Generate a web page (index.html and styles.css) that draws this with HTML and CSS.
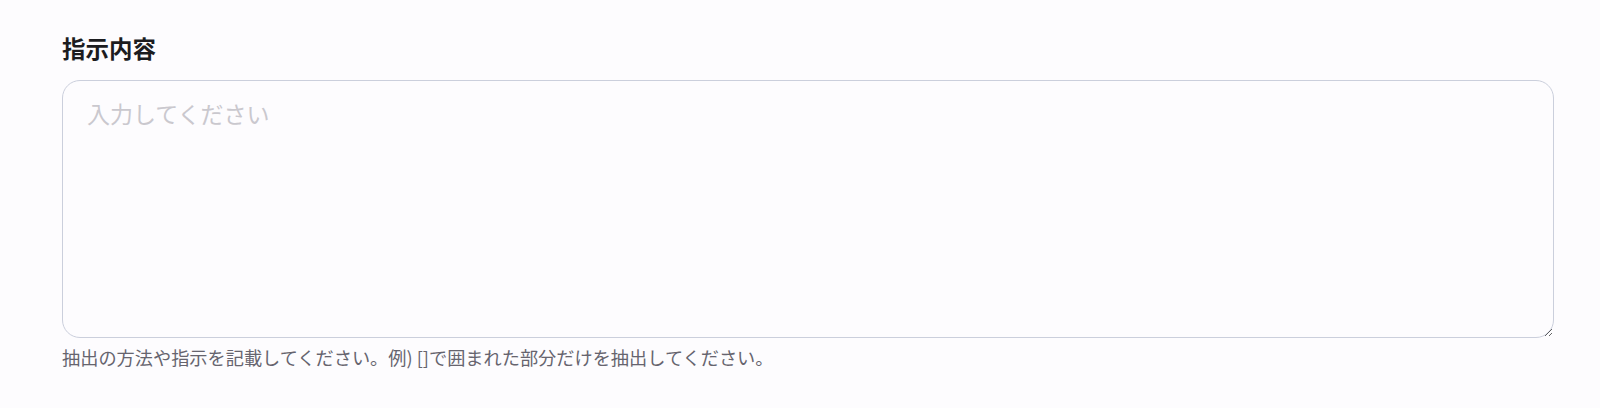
FILE: index.html
```html
<!DOCTYPE html>
<html lang="ja">
<head>
<meta charset="UTF-8" />
<title>指示内容</title>
<link rel="stylesheet" href="styles.css">
</head>
<body>
<div class="field">
	<label class="field-label" for="instruction">指示内容</label>
	<textarea id="instruction" class="field-input" placeholder="入力してください"></textarea>
	<p class="field-help">抽出の方法や指示を記載してください。例) []で囲まれた部分だけを抽出してください。</p>
</div>
</body>
</html>
```

FILE: styles.css
```css
* {
	margin: 0;
	padding: 0;
	box-sizing: border-box;
}

body {
	background-color: #fdfcfe;
	font-family: "Noto Sans CJK JP", "Noto Sans", sans-serif;
	color: #1c1c1f;
}

.field {
	padding: 33px 46px 0 62px;
}

.field-label {
	display: block;
	font-size: 23.5px;
	font-weight: 700;
	line-height: 30px;
}

.field-input {
	display: block;
	width: 100%;
	height: 258px;
	margin-top: 17px;
	padding: 17px 24px;
	font: 23px/30px "Noto Sans CJK JP", "Noto Sans", sans-serif;
	color: #1c1c1f;
	background-color: #fdfcfe;
	border: 1.5px solid #cbcfdc;
	border-radius: 18px;
	resize: vertical;
	outline: none;
}

.field-input::placeholder {
	color: #cac8ce;
}

.field-help {
	margin-top: 6px;
	font-size: 18.2px;
	line-height: 26px;
	color: #66646e;
}
```
